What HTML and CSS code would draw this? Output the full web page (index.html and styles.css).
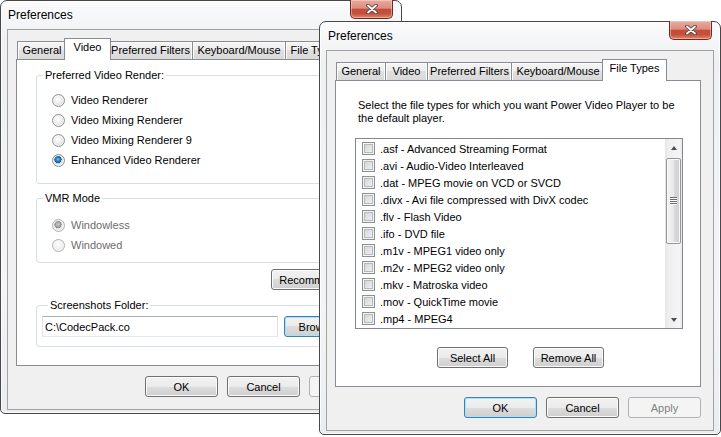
FILE: index.html
```html
<!DOCTYPE html>
<html>
  <head>
    <title>Preferences</title>
    <link rel="stylesheet" href="styles.css">
  </head>
  <body>
    <div class="desktop">
      <div class="window back">
        <div class="titlebar">
          <span class="title">Preferences</span>
          <button class="close-btn">
            <svg width="12" height="10" viewBox="0 0 12 10">
              <path d="M2 1.5L10 8.5M10 1.5L2 8.5" stroke="#454545" stroke-width="3.6" stroke-linecap="round" fill="none"/>
              <path d="M2 1.5L10 8.5M10 1.5L2 8.5" stroke="#fff" stroke-width="1.8" stroke-linecap="round" fill="none"/>
            </svg>
          </button>
        </div>
        <div class="client">
          <div class="tabs">
            <span class="tab general">General</span>
            <span class="tab video active">Video</span>
            <span class="tab filters">Preferred Filters</span>
            <span class="tab keys">Keyboard/Mouse</span>
            <span class="tab types">File Types</span>
          </div>
          <div class="panel">
            <fieldset class="group render">
              <legend>Preferred Video Render:</legend>
              <label class="radio"><span class="dot"></span>Video Renderer</label>
              <label class="radio"><span class="dot"></span>Video Mixing Renderer</label>
              <label class="radio"><span class="dot"></span>Video Mixing Renderer 9</label>
              <label class="radio"><span class="dot on"></span>Enhanced Video Renderer</label>
            </fieldset>
            <fieldset class="group mode">
              <legend>VMR Mode</legend>
              <label class="radio off"><span class="dot on"></span>Windowless</label>
              <label class="radio off"><span class="dot"></span>Windowed</label>
            </fieldset>
            <div class="row-right">
              <button class="btn wide">Recommended</button>
            </div>
            <fieldset class="group folder">
              <legend>Screenshots Folder:</legend>
              <div class="folder-row">
                <input class="textbox" type="text" value="C:\CodecPack.co">
                <button class="btn default">Browse...</button>
              </div>
            </fieldset>
          </div>
          <div class="actions">
            <button class="btn">OK</button>
            <button class="btn">Cancel</button>
            <button class="btn" disabled>Apply</button>
          </div>
        </div>
      </div>

      <div class="window front">
        <div class="titlebar">
          <span class="title">Preferences</span>
          <button class="close-btn">
            <svg width="12" height="10" viewBox="0 0 12 10">
              <path d="M2 1.5L10 8.5M10 1.5L2 8.5" stroke="#454545" stroke-width="3.6" stroke-linecap="round" fill="none"/>
              <path d="M2 1.5L10 8.5M10 1.5L2 8.5" stroke="#fff" stroke-width="1.8" stroke-linecap="round" fill="none"/>
            </svg>
          </button>
        </div>
        <div class="client">
          <div class="tabs">
            <span class="tab general">General</span>
            <span class="tab video">Video</span>
            <span class="tab filters">Preferred Filters</span>
            <span class="tab keys">Keyboard/Mouse</span>
            <span class="tab types active">File Types</span>
          </div>
          <div class="panel">
            <p class="intro">Select the file types for which you want Power Video Player to be<br>the default player.</p>
            <div class="filelist">
              <div class="items">
                <label class="item"><span class="check"></span>.asf - Advanced Streaming Format</label>
                <label class="item"><span class="check"></span>.avi - Audio-Video Interleaved</label>
                <label class="item"><span class="check"></span>.dat - MPEG movie on VCD or SVCD</label>
                <label class="item"><span class="check"></span>.divx - Avi file compressed with DivX codec</label>
                <label class="item"><span class="check"></span>.flv - Flash Video</label>
                <label class="item"><span class="check"></span>.ifo - DVD file</label>
                <label class="item"><span class="check"></span>.m1v - MPEG1 video only</label>
                <label class="item"><span class="check"></span>.m2v - MPEG2 video only</label>
                <label class="item"><span class="check"></span>.mkv - Matroska video</label>
                <label class="item"><span class="check"></span>.mov - QuickTime movie</label>
                <label class="item"><span class="check"></span>.mp4 - MPEG4</label>
              </div>
              <div class="scrollbar">
                <span class="arrow"><span class="tri up"></span></span>
                <span class="track"><span class="thumb"><span class="grip"></span></span></span>
                <span class="arrow"><span class="tri down"></span></span>
              </div>
            </div>
            <div class="list-buttons">
              <button class="btn small">Select All</button>
              <button class="btn small">Remove All</button>
            </div>
          </div>
          <div class="actions">
            <button class="btn default">OK</button>
            <button class="btn">Cancel</button>
            <button class="btn" disabled>Apply</button>
          </div>
        </div>
      </div>
    </div>
  </body>
</html>
```

FILE: styles.css
```css
* {
  margin: 0;
  padding: 0;
  box-sizing: border-box;
}

body {
  background-color: #fff;
  font-family: "Liberation Sans", Arial, sans-serif;
  font-size: 11px;
  color: #000;
}

.desktop {
  position: relative;
  width: 721px;
  height: 437px;
  overflow: hidden;
}

/* windows */
.window {
  position: absolute;
  width: 402px;
  height: 414px;
  padding: 0 6px;
  border: 1px solid #474747;
  border-radius: 7px 7px 5px 5px;
  background: linear-gradient(#fbfbfc, #eef0f2 40px, #f3f4f6 70%, #eaecef);
  box-shadow: inset 0 0 0 1px rgba(255, 255, 255, 0.75);
}
.back {
  left: 0;
  top: 0;
}
.front {
  left: 319px;
  top: 21px;
}

.titlebar {
  display: flex;
  height: 28px;
  padding: 0 2px 0 1px;
}
.front .titlebar {
  padding-left: 2px;
}
.title {
  font-size: 12px;
  line-height: 14px;
  padding-top: 7px;
}
.close-btn {
  display: flex;
  align-items: center;
  justify-content: center;
  margin-left: auto;
  margin-top: -1px;
  width: 43px;
  height: 19px;
  border: 1px solid #6b2a22;
  border-top: none;
  border-radius: 0 0 5px 5px;
  background: linear-gradient(#e9ab9d, #dc8d7f 45%, #c54c3c 52%, #c3503d 75%, #e0876b);
  box-shadow: inset 0 0 0 1px rgba(255, 225, 215, 0.45);
}

.client {
  height: 381px;
  border: 1px solid #a3a3a3;
  background: #f0f0f0;
  padding: 8px 12px 0 8px;
}

/* tabs */
.tabs {
  display: flex;
  align-items: flex-end;
  height: 21px;
  padding-left: 1px;
}
.tab {
  height: 18px;
  margin-left: -1px;
  border: 1px solid #898c95;
  border-bottom: none;
  background: linear-gradient(#f5f5f5, #ececec 50%, #e0e0e0 50%, #d9d9d9);
  box-shadow: inset 1px 1px 0 #fcfcfc, inset -1px 0 0 #fcfcfc;
  line-height: 17px;
  text-align: center;
  white-space: nowrap;
  overflow: hidden;
}
.tab:first-child {
  margin-left: 0;
}
.tab.general { width: 50px; }
.tab.video { width: 43px; }
.tab.filters { width: 85px; }
.tab.keys { width: 94px; }
.tab.types { width: 61px; }
.tab.active {
  position: relative;
  z-index: 1;
  height: 22px;
  margin: 0 -2px -1px -3px;
  background: #fff;
  box-shadow: none;
}
.tab.active.video { width: 47px; }
.tab.active.types { width: 65px; }

.panel {
  height: 307px;
  border: 1px solid #898c95;
  background: #fff;
  padding: 0 19px;
}

/* group boxes */
.group {
  border: 1px solid #d5dfe5;
  border-radius: 3px;
}
.group legend {
  margin-left: 6px;
  padding: 0 2px;
  line-height: 13px;
}
.render {
  margin-top: 9px;
  padding: 8px 0 13px;
}
.mode {
  margin-top: 8px;
  padding: 10px 0 7px;
}
.folder {
  margin-top: 9px;
  padding: 4px 0 9px 5px;
}

.radio {
  display: flex;
  align-items: center;
  gap: 6px;
  height: 20px;
  padding-left: 15px;
}
.radio.off {
  color: #6d6d6d;
}
.dot {
  width: 13px;
  height: 13px;
  border: 1px solid #8e8f8f;
  border-radius: 50%;
  background: radial-gradient(circle at 45% 40%, #fff 0, #f1f1f1 35%, #cdcdcd 100%);
  box-shadow: inset 0 0 0 1px #f6f6f6;
}
.dot.on {
  background: radial-gradient(circle at 45% 40%, #8fd3f5 0, #2a8ccb 1.5px, #0f5e95 3.5px, #c7c7c7 3.7px, #e6e6e6 5px, #cdcdcd 100%);
}
.off .dot {
  border-color: #b1b1b1;
  background: radial-gradient(circle at 45% 40%, #fff 0, #f4f4f4 40%, #e0e0e0 100%);
}
.off .dot.on {
  background: radial-gradient(circle at 45% 40%, #d2d2d2 0, #a9a9a9 2px, #8c8c8c 3.5px, #d9d9d9 3.7px, #ececec 5px, #dcdcdc 100%);
}

.row-right {
  display: flex;
  justify-content: flex-end;
  margin-top: 6px;
}

.folder-row {
  display: flex;
  gap: 6px;
}
.textbox {
  width: 236px;
  height: 21px;
  padding: 0 2px;
  border: 1px solid;
  border-color: #abadb3 #dbdfe6 #e3e9ef #e2e3ea;
  font: inherit;
  color: #000;
  background: #fff;
}

/* buttons */
.btn {
  width: 73px;
  height: 21px;
  border: 1px solid #707070;
  border-radius: 3px;
  background: linear-gradient(#f2f2f2, #ebebeb 50%, #dddddd 50%, #cfcfcf);
  box-shadow: inset 0 0 0 1px #fbfbfb;
  font: inherit;
  color: #000;
}
.btn.wide {
  width: 91px;
}
.btn.small {
  width: 71px;
}
.btn.default {
  width: 75px;
  border-color: #3c7fb1;
  box-shadow: inset 0 0 0 1px #a7e2f8;
}
.actions .btn.default {
  width: 73px;
}
.btn:disabled {
  border-color: #adb2b5;
  background: #f4f4f4;
  box-shadow: none;
  color: #838383;
}

.actions {
  display: flex;
  justify-content: flex-end;
  gap: 9px;
  margin-top: 10px;
}

/* file types page */
.intro {
  margin-top: 18px;
  padding-left: 3px;
  line-height: 13px;
}

.filelist {
  display: flex;
  width: 328px;
  height: 191px;
  margin-top: 13px;
  border: 1px solid #828790;
  background: #fff;
}
.items {
  flex: 1;
  padding-top: 1px;
  overflow: hidden;
}
.item {
  display: flex;
  align-items: center;
  gap: 5px;
  height: 17px;
  padding-left: 6px;
  white-space: nowrap;
}
.check {
  flex: none;
  width: 13px;
  height: 13px;
  border: 1px solid #8e8f8f;
  background: linear-gradient(135deg, #cbcfd5, #f7f7f7);
  box-shadow: inset 0 0 0 1px #f4f4f4, inset 0 0 0 2px #b4b9be;
}

.scrollbar {
  display: flex;
  flex-direction: column;
  width: 17px;
  background: linear-gradient(90deg, #e3e3e3, #eeeeee 15%, #f5f5f5 85%, #e8e8e8);
}
.arrow {
  display: flex;
  align-items: center;
  justify-content: center;
  height: 17px;
}
.tri {
  width: 0;
  height: 0;
  border-left: 3.5px solid transparent;
  border-right: 3.5px solid transparent;
}
.tri.up {
  border-bottom: 4px solid #4d4d4d;
}
.tri.down {
  border-top: 4px solid #4d4d4d;
}
.track {
  flex: 1;
  padding: 2px 1px 0;
}
.thumb {
  display: flex;
  align-items: center;
  justify-content: center;
  height: 86px;
  border: 1px solid #979797;
  border-radius: 2px;
  background: linear-gradient(90deg, #f3f3f3, #e9e9e9 50%, #d9d9d9 50%, #d0d0d0);
  box-shadow: inset 0 0 0 1px #f8f8f8;
}
.grip {
  width: 7px;
  height: 8px;
  background: repeating-linear-gradient(#6e6e6e 0 1px, #fafafa 1px 2px);
}

.list-buttons {
  display: flex;
  gap: 25px;
  margin-top: 18px;
  padding-left: 82px;
}
```
